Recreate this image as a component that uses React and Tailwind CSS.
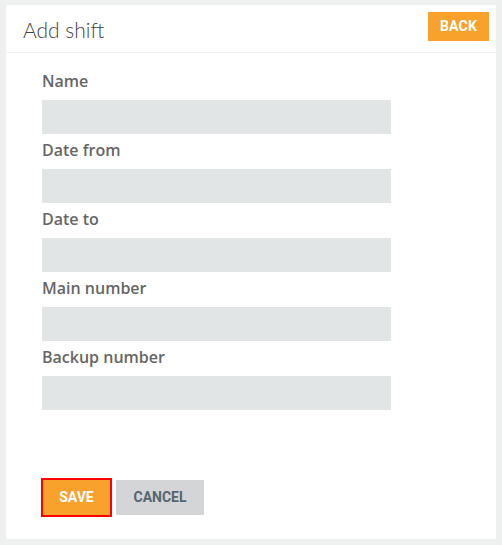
const fields = ['Name', 'Date from', 'Date to', 'Main number', 'Backup number']

export default function App() {
  return (
    <div className="w-[502px] h-[545px] bg-[#eef0ef] pl-[6px] pt-[5px]">
      <div className="w-[490px] h-[534px] bg-white flex flex-col">
        <div className="h-[48px] border-b border-[#f0f2f2] flex items-start justify-between pl-[17px] pr-[7px]">
          <div className="mt-[11px] text-[21px] leading-[28px] font-light text-[#444] [font-family:Lato,'Open_Sans',sans-serif]">
            Add shift
          </div>
          <button className="mt-[7px] w-[61px] h-[29px] bg-[#f8a12b] text-white text-[14px] font-bold tracking-[0.2px] [font-family:Roboto,sans-serif]">
            BACK
          </button>
        </div>

        <div className="pl-[36px] pt-[12px] flex flex-col">
          {fields.map(f => (
            <div key={f} className="flex flex-col">
              <label className="mt-[4px] mb-[7px] text-[16px] leading-[24px] font-semibold text-[#666] [font-family:'Open_Sans',sans-serif]">
                {f}
              </label>
              <div className="w-[349px] h-[34px] bg-[#e1e5e5]" />
            </div>
          ))}
        </div>

        <div className="pl-[37px] mt-[70px] flex gap-[6px]">
          <button className="w-[67px] h-[35px] bg-[#f8a12b] text-white text-[14px] font-bold ring-2 ring-[#f00] [font-family:Roboto,sans-serif]">
            SAVE
          </button>
          <button className="w-[88px] h-[35px] bg-[#d3d5d6] text-[#56656e] text-[14px] font-bold [font-family:Roboto,sans-serif]">
            CANCEL
          </button>
        </div>
      </div>
    </div>
  )
}
